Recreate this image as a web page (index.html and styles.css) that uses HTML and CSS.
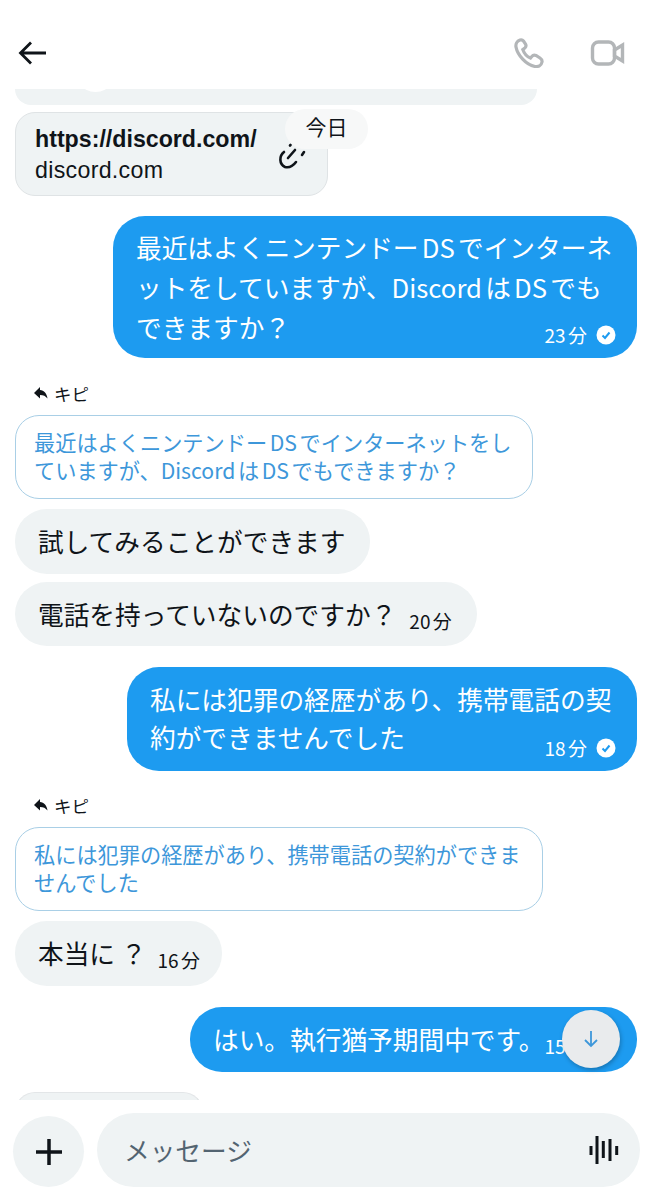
FILE: index.html
```html
<!DOCTYPE html>
<html lang="ja">
<head>
  <meta charset="UTF-8">
  <meta name="viewport" content="width=device-width, initial-scale=1.0">
  <title>メッセージ</title>
  <link rel="stylesheet" href="styles.css">
</head>
<body>
  <header class="topbar">
    <svg class="back" width="30" height="30" viewBox="0 0 30 30"><path d="M28 15H3M13 4.500L2.500 15 13 25.500" fill="none" stroke="#0f1419" stroke-width="2.800"/></svg>
    <div class="topbar-actions">
      <svg width="30" height="30" viewBox="0 0 30 30"><path d="M6 2C3 3 1.500 6 2 9c1.500 8 10 18 19 19.500 3.500.5 6.500-1.500 7-4.500.3-1.500-.5-3-2-4l-4-2.500c-1.500-.7-3-.5-4 .8L16.500 20c-4-1.500-6.500-5-7.700-8.500l2-1.500c1.200-1 1.500-2.500.7-4l-2-3C8.700 2 7.300 1.600 6 2z" fill="none" stroke="#b3b6b8" stroke-width="3.200"/></svg>
      <svg width="36" height="28" viewBox="0 0 36 28"><rect x="3.500" y="3" width="22" height="22" rx="6" fill="none" stroke="#b3b6b8" stroke-width="3.400"/><path d="M25.500 11l8-5v16l-8-5z" fill="none" stroke="#b3b6b8" stroke-width="3.400"/></svg>
    </div>
  </header>

  <main class="messages">
    <div class="cut-top"></div>

    <div class="link-card">
      <div class="link-text">
        <div class="link-url">https://discord.com/</div>
        <div class="link-host">discord.com</div>
      </div>
      <svg class="link-icon" width="32" height="30" viewBox="0 0 32 30"><g fill="none" stroke="#0f1419" stroke-width="2.600" stroke-linecap="round"><path d="M8 11C3 15 3 23 9 26c4 1 8-1 11-5"/><path d="M12 17l7-8"/><path d="M26 14l2-3"/><path d="M14 4.500l.5-.5"/></g></svg>
      <span class="date-pill">今日</span>
    </div>

    <div class="bubble mine first">
      <p>最近はよくニンテンドーDSでインターネ<br>ットをしていますが、DiscordはDSでも<br>できますか？</p>
      <div class="meta"><span>23分</span>
        <svg width="20" height="20" viewBox="0 0 20 20"><circle cx="10" cy="10" r="9.500" fill="#fff"/><path d="M6.500 10.500l2.500 2.500 4.500-5.500" fill="none" stroke="#1d9bf0" stroke-width="2"/></svg>
      </div>
    </div>

    <div class="reply-label first-reply">
      <svg width="14" height="12" viewBox="0 0 14 12"><path d="M0 6l6-6v3c4 0 7 4 7.500 8.500C11.500 9 9.500 8 6 8v3.500z" fill="#0f1419"/></svg>
      キピ
    </div>
    <div class="quote q1">最近はよくニンテンドーDSでインターネットをし<br>ていますが、DiscordはDSでもできますか？</div>

    <div class="bubble theirs b1">試してみることができます</div>
    <div class="bubble theirs b2">電話を持っていないのですか？<span class="time">20分</span></div>

    <div class="bubble mine second">
      <p>私には犯罪の経歴があり、携帯電話の契<br>約ができませんでした</p>
      <div class="meta"><span>18分</span>
        <svg width="20" height="20" viewBox="0 0 20 20"><circle cx="10" cy="10" r="9.500" fill="#fff"/><path d="M6.500 10.500l2.500 2.500 4.500-5.500" fill="none" stroke="#1d9bf0" stroke-width="2"/></svg>
      </div>
    </div>

    <div class="reply-label second-reply">
      <svg width="14" height="12" viewBox="0 0 14 12"><path d="M0 6l6-6v3c4 0 7 4 7.500 8.500C11.500 9 9.500 8 6 8v3.500z" fill="#0f1419"/></svg>
      キピ
    </div>
    <div class="quote q2">私には犯罪の経歴があり、携帯電話の契約ができま<br>せんでした</div>

    <div class="bubble theirs b3">本当に ？<span class="time">16分</span></div>

    <div class="bubble mine third">はい。執行猶予期間中です。<span class="time">15分</span></div>

    <div class="cut-bottom"></div>

    <button class="scroll-down" type="button">
      <svg width="18" height="20" viewBox="0 0 18 20"><path d="M9 2v15M3 11l6 6 6-6" fill="none" stroke="#3d97da" stroke-width="1.800"/></svg>
    </button>
  </main>

  <footer class="composer">
    <button class="plus" type="button">
      <svg width="28" height="28" viewBox="0 0 28 28"><path d="M14 1v26M1 14h26" stroke="#0f1419" stroke-width="3.500"/></svg>
    </button>
    <div class="input">
      <span>メッセージ</span>
      <svg width="30" height="30" viewBox="0 0 30 30"><path d="M2 11v9M8 1v28M14.300 6v17M21 4v22M27.700 11v9" stroke="#0f1419" stroke-width="3"/></svg>
    </div>
  </footer>
</body>
</html>
```

FILE: styles.css
```css
* {
  box-sizing: border-box;
}
body {
  margin: 0;
  height: 1200px;
  overflow: hidden;
  background: #fff;
  display: flex;
  flex-direction: column;
  font-family: "Noto Sans CJK JP", "Liberation Sans", sans-serif;
  color: #0f1419;
  text-autospace: normal;
}
.topbar {
  height: 89px;
  flex: none;
  padding: 37px 28px 0 18px;
  display: flex;
  justify-content: space-between;
  align-items: flex-start;
}
.topbar-actions {
  display: flex;
  gap: 45px;
  align-items: center;
  margin-top: 1px;
}
.back {
  margin-top: 1px;
}
.messages {
  position: relative;
  height: 1011px;
  flex: none;
  overflow: hidden;
  padding: 0 16px 0 15px;
}
.cut-top {
  position: relative;
  width: 522px;
  height: 16px;
  background: #eff3f4;
  border-radius: 0 0 24px 24px;
}
.cut-top::before {
  content: "";
  position: absolute;
  left: 68px;
  top: -10px;
  width: 25px;
  height: 13px;
  border-radius: 50%;
  background: #fff;
}
.link-card {
  position: relative;
  width: 313px;
  height: 84px;
  margin-top: 7px;
  padding: 11px 19px;
  background: #eff3f4;
  border: 1px solid #dfe3e5;
  border-radius: 20px;
  font-family: "Liberation Sans", sans-serif;
  font-size: 23.2px;
  line-height: 31px;
}
.link-url {
  font-weight: 700;
}
.link-host {
  letter-spacing: 0.3px;
}
.link-icon {
  position: absolute;
  left: 260px;
  top: 28px;
}
.date-pill {
  position: absolute;
  left: 269px;
  top: -4px;
  width: 83px;
  height: 40px;
  border-radius: 20px;
  background: #f7f8f8;
  font-family: "Noto Sans CJK JP", sans-serif;
  font-size: 21px;
  line-height: 35px;
  text-align: center;
}
.bubble {
  border-radius: 32px;
  font-size: 25.7px;
  line-height: 40px;
}
.bubble p {
  margin: 0;
}
.mine {
  margin-left: auto;
  background: #1d9bf0;
  color: #fff;
  position: relative;
}
.theirs {
  width: fit-content;
  height: 65px;
  background: #eff3f4;
  padding: 12px 25px 12px 23px;
}
.meta {
  position: absolute;
  right: 21px;
  bottom: 11px;
  display: flex;
  align-items: center;
  gap: 9px;
  font-size: 19px;
  line-height: 24px;
}
.time {
  margin-left: 13px;
  font-size: 19px;
  vertical-align: -4px;
}
.first {
  width: 524px;
  height: 142px;
  margin-top: 20px;
  padding: 11px 23px;
}
.second {
  width: 510px;
  height: 104px;
  margin-top: 21px;
  padding: 13px 23px;
  line-height: 38px;
}
.third {
  width: 447px;
  height: 65px;
  margin-top: 21px;
  padding: 12px 23px;
  white-space: nowrap;
  overflow: hidden;
}
.third .time {
  margin-left: 0;
}
.reply-label {
  display: flex;
  align-items: center;
  gap: 6px;
  height: 24px;
  padding-left: 19px;
  font-size: 17.500px;
}
.first-reply {
  margin-top: 23px;
}
.second-reply {
  margin-top: 22px;
}
.quote {
  margin-top: 10px;
  height: 84px;
  padding: 12px 18px;
  border: 1px solid #a9cfe6;
  border-radius: 24px;
  color: #3d97da;
  font-size: 21.200px;
  line-height: 28px;
}
.q1 {
  width: 518px;
}
.q2 {
  width: 528px;
}
.b1 {
  margin-top: 10px;
}
.b2 {
  height: 64px;
  margin-top: 8px;
}
.b3 {
  margin-top: 10px;
  padding-right: 22px;
}
.b3 .time {
  margin-left: 11px;
}
.cut-bottom {
  width: 188px;
  height: 20px;
  margin-top: 20px;
  background: #eff3f4;
  border: 1px solid #e3e6e8;
  border-radius: 20px 20px 0 0;
}
.scroll-down {
  position: absolute;
  left: 562px;
  top: 921px;
  width: 58px;
  height: 58px;
  padding: 0;
  border: none;
  border-radius: 50%;
  background: #e9ebed;
  box-shadow: 1px 2px 4px rgba(0, 0, 0, 0.25);
  display: flex;
  align-items: center;
  justify-content: center;
}
.composer {
  height: 100px;
  flex: none;
  padding: 13px;
  display: flex;
  gap: 13px;
}
.plus {
  width: 71px;
  height: 71px;
  margin-top: 3px;
  padding: 0;
  border: none;
  border-radius: 50%;
  background: #eff3f4;
  display: flex;
  align-items: center;
  justify-content: center;
}
.input {
  flex: 1;
  height: 74px;
  border-radius: 37px;
  background: #eff3f4;
  display: flex;
  align-items: center;
  justify-content: space-between;
  padding: 0 21px 0 27px;
  font-size: 25.7px;
  color: #536471;
}
.input span {
  padding-bottom: 2px;
}
```
